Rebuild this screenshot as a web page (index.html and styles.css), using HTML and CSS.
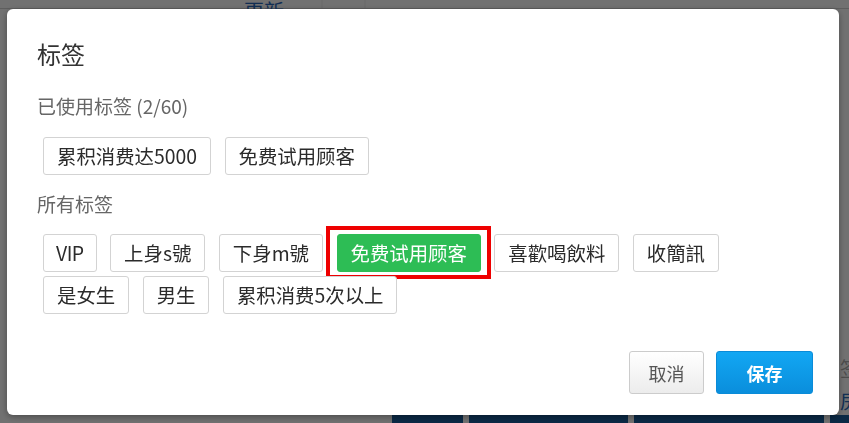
FILE: index.html
```html
<!DOCTYPE html>
<html>
  <head>
    <meta charset="utf-8">
    <title>标签</title>
    <link rel="stylesheet" href="styles.css">
  </head>
  <body>
    <div class="page">
      <div class="page-top">
        <span class="page-top-link">更新</span>
      </div>
      <div class="page-main">
        <div class="page-side">
          <span class="side-label">签</span>
          <span class="side-link">房</span>
        </div>
      </div>
      <div class="page-foot">
        <span class="foot-btn w1"></span>
        <span class="foot-btn w2"></span>
        <span class="foot-btn w3"></span>
        <span class="foot-btn w4"></span>
      </div>
    </div>

    <div class="overlay">
      <div class="modal">
        <h2 class="modal-title">标签</h2>

        <div class="section-label">已使用标签 (2/60)</div>
        <div class="tag-list">
          <span class="tag">累积消费达5000</span>
          <span class="tag">免费试用顾客</span>
        </div>

        <div class="section-label">所有标签</div>
        <div class="tag-list">
          <span class="tag tag-short">VIP</span>
          <span class="tag">上身s號</span>
          <span class="tag">下身m號</span>
          <span class="tag tag-active">免费试用顾客<span class="mark"></span></span>
          <span class="tag">喜歡喝飲料</span>
          <span class="tag">收簡訊</span>
          <span class="tag">是女生</span>
          <span class="tag">男生</span>
          <span class="tag">累积消费5次以上</span>
        </div>

        <div class="modal-actions">
          <button class="btn btn-cancel">取消</button>
          <button class="btn btn-save">保存</button>
        </div>
      </div>
    </div>
  </body>
</html>
```

FILE: styles.css
```css
* {
  margin: 0;
  padding: 0;
  box-sizing: border-box;
}

body {
  font-family: "Noto Sans CJK SC", "Noto Sans", sans-serif;
  width: 849px;
  height: 423px;
  overflow: hidden;
  background: #fbfbfb;
  color: #333;
}

/* page under the dialog */
.page {
  display: flex;
  flex-direction: column;
  height: 423px;
}

.page-top {
  height: 9px;
  border-bottom: 1px solid #d0d0d0;
  background: linear-gradient(90deg, #fbfbfb 0 321px, #f2f2f2 321px 323px, #fbfbfb 323px 364px, #f2f2f2 364px 366px, #fbfbfb 366px);
  overflow: visible;
}

.page-top-link {
  display: inline-block;
  margin-left: 244px;
  margin-top: -9px;
  font-size: 20px;
  line-height: 20px;
  color: #2866b8;
}

.page-main {
  flex: 1;
  display: flex;
  justify-content: flex-end;
}

.page-side {
  width: 10px;
  display: flex;
  flex-direction: column;
  justify-content: flex-end;
  padding-bottom: 2px;
  overflow: hidden;
}

.side-label {
  font-size: 20px;
  line-height: 40px;
  color: #aaa;
  margin-left: 1px;
}

.side-link {
  font-size: 20px;
  line-height: 24px;
  color: #2c6ab8;
  margin-left: 1px;
}

.page-foot {
  height: 8px;
  display: flex;
  gap: 6px;
  padding-left: 392px;
}

.foot-btn {
  background: #185b9a;
  height: 8px;
}

.foot-btn.w1 { width: 71px; }
.foot-btn.w2 { width: 159px; }
.foot-btn.w3 { width: 190px; }
.foot-btn.w4 { flex: 1; }

/* dialog */
.overlay {
  position: fixed;
  inset: 0;
  background: rgba(0, 0, 0, 0.55);
  padding: 9px 10px 8px 7px;
  display: flex;
}

.modal {
  flex: 1;
  background: #fff;
  border-radius: 6px;
  box-shadow: 0 2px 6px rgba(0, 0, 0, 0.35);
  padding: 28px 26px 21px 30px;
  display: flex;
  flex-direction: column;
}

.modal-title {
  font-size: 24px;
  font-weight: normal;
  line-height: 34px;
  color: #333;
  margin-bottom: 22px;
}

.section-label {
  font-size: 19px;
  line-height: 26px;
  color: #666;
  margin-bottom: 18px;
}

.tag-list {
  display: flex;
  flex-wrap: wrap;
  gap: 4px 13.5px;
  padding-left: 6px;
  margin-bottom: 16px;
}

.tag-list + .section-label {
  margin-bottom: 17px;
}

.tag {
  position: relative;
  display: inline-block;
  font-size: 19.4px;
  line-height: 26px;
  padding: 5px 13px;
  border: 1px solid #d3d3d3;
  border-radius: 3px;
  background: #fff;
  color: #2b2b2b;
}

/* latin-only labels sit a little tighter */
.tag-short {
  padding: 5px 12px;
  letter-spacing: -0.5px;
}

.tag-active {
  background: #2dbd55;
  border-color: #2dbd55;
  color: #fff;
}

.tag-active .mark {
  position: absolute;
  top: -9px;
  right: -11px;
  bottom: -8px;
  left: -12px;
  border: 4px solid #ee0000;
}

.modal-actions {
  margin-top: auto;
  display: flex;
  justify-content: flex-end;
  gap: 12px;
}

.btn {
  font-family: inherit;
  font-size: 18px;
  height: 43px;
  border-radius: 3px;
  cursor: pointer;
}

.btn-cancel {
  width: 75px;
  color: #555;
  background: linear-gradient(#ffffff, #ececec);
  border: 1px solid #cccccc;
}

.btn-save {
  width: 97px;
  color: #fff;
  font-weight: 600;
  background: linear-gradient(#12a7f3, #0a8edc);
  border: 1px solid #0a8bd8;
}
```
